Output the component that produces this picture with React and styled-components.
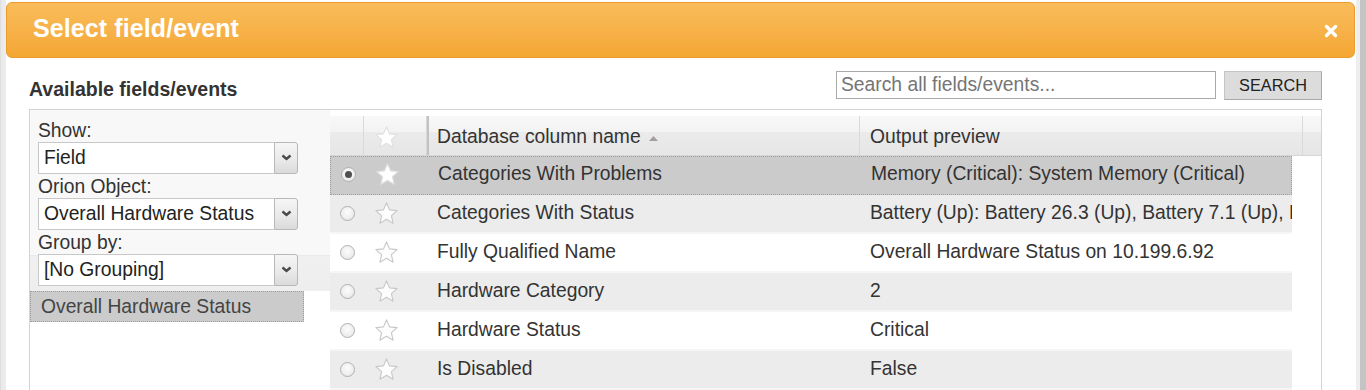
import styled, { createGlobalStyle } from "styled-components";

const GlobalStyle = createGlobalStyle`
  html, body {
    margin: 0;
    padding: 0;
    background: #fff;
  }
  body {
    font-family: "Liberation Sans", Arial, sans-serif;
    color: #333;
    overflow: hidden;
  }
  * {
    box-sizing: border-box;
  }
`;

const rows = [
  { name: "Categories With Problems", preview: "Memory (Critical): System Memory (Critical)", selected: true },
  { name: "Categories With Status", preview: "Battery (Up): Battery 26.3 (Up), Battery 7.1 (Up), Drive (Up)" },
  { name: "Fully Qualified Name", preview: "Overall Hardware Status on 10.199.6.92" },
  { name: "Hardware Category", preview: "2" },
  { name: "Hardware Status", preview: "Critical" },
  { name: "Is Disabled", preview: "False" },
];

const filters = [
  { label: "Show:", value: "Field" },
  { label: "Orion Object:", value: "Overall Hardware Status" },
  { label: "Group by:", value: "[No Grouping]" },
];

const Star = ({ filled }) => (
  <StarSvg viewBox="0 0 24 24" $filled={filled}>
    <polygon points="12,1.8 14.9,8.5 22.2,9.2 16.7,14.1 18.3,21.3 12,17.6 5.7,21.3 7.3,14.1 1.8,9.2 9.1,8.5" />
  </StarSvg>
);

const App = () => {
  return (
    <Page>
      <GlobalStyle />
      <LeftEdge />
      <Dialog>
        <Header>
          <Title>Select field/event</Title>
          <CloseIcon viewBox="0 0 14 14">
            <path d="M2.5 2.5 L11.5 11.5 M11.5 2.5 L2.5 11.5" />
          </CloseIcon>
        </Header>
        <Body>
          <Toolbar>
            <SectionTitle>Available fields/events</SectionTitle>
            <SearchGroup>
              <SearchInput placeholder="Search all fields/events..." />
              <SearchButton>SEARCH</SearchButton>
            </SearchGroup>
          </Toolbar>
          <Panel>
            <Sidebar>
              <FilterBox>
                {filters.map((f) => (
                  <FilterField key={f.label}>
                    <FilterLabel>{f.label}</FilterLabel>
                    <Combo>
                      <ComboValue>{f.value}</ComboValue>
                      <ComboButton>
                        <svg width="11" height="7" viewBox="0 0 11 7">
                          <polyline points="1.5,1.5 5.5,5 9.5,1.5" fill="none" stroke="#4a4a4a" strokeWidth="2.4" />
                        </svg>
                      </ComboButton>
                    </Combo>
                  </FilterField>
                ))}
              </FilterBox>
              <GroupItem>Overall Hardware Status</GroupItem>
            </Sidebar>
            <Grid>
              <GridHeader>
                <HeadCell $w={34} />
                <HeadCell $w={63} $pad={10}>
                  <Star filled />
                </HeadCell>
                <HeadCell $w={433} $pad={8} $sorted>
                  Database column name
                  <SortArrow viewBox="0 0 9 5">
                    <polygon points="0,5 4.5,0 9,5" />
                  </SortArrow>
                </HeadCell>
                <HeadCell $w={443}>Output preview</HeadCell>
                <HeadCell $w={18} />
              </GridHeader>
              {rows.map((r, i) => (
                <Row key={r.name} $alt={i % 2 === 1} $selected={r.selected}>
                  <Cell $w={34} $center>
                    <Radio $checked={r.selected} />
                  </Cell>
                  <Cell $w={63} $pad={10}>
                    <Star filled={r.selected} />
                  </Cell>
                  <Cell $w={433}>{r.name}</Cell>
                  <Cell $w={432}>{r.preview}</Cell>
                </Row>
              ))}
            </Grid>
          </Panel>
        </Body>
      </Dialog>
      <RightEdge />
    </Page>
  );
};

export default App;

const Page = styled.div`
  display: flex;
  height: 390px;
  overflow: hidden;
`;

const LeftEdge = styled.div`
  width: 6px;
  flex-shrink: 0;
  background: linear-gradient(to right, #dcdcdc 0, #ebebeb 2px, #ececec 100%);
`;

const RightEdge = styled.div`
  width: 10px;
  flex-shrink: 0;
  background: linear-gradient(to right, #eeeeee 0, #eeeeee 4px, #c4c4c4 4px, #c4c4c4 100%);
`;

const Dialog = styled.div`
  flex: 1;
  display: flex;
  flex-direction: column;
  padding-top: 2px;
  background: #fff;
`;

const Header = styled.div`
  height: 57px;
  margin-right: 1px;
  display: flex;
  align-items: center;
  justify-content: space-between;
  padding: 0 16px 3px 26px;
  border: 1px solid #eb9c2c;
  border-radius: 6px;
  background: linear-gradient(to bottom, #f9bc58 0%, #f7b24a 50%, #f4a632 100%);
`;

const Title = styled.h1`
  margin: 0;
  font-size: 25px;
  font-weight: bold;
  color: #fff;
  letter-spacing: 0.1px;
`;

const CloseIcon = styled.svg`
  width: 14px;
  height: 14px;
  margin-top: 5px;
  stroke: #fff;
  stroke-width: 3.4;
  stroke-linecap: round;
  fill: none;
`;

const Body = styled.div`
  flex: 1;
  display: flex;
  flex-direction: column;
  padding: 0 34px 0 23px;
`;

const Toolbar = styled.div`
  height: 51px;
  display: flex;
  align-items: flex-end;
  justify-content: space-between;
  padding-bottom: 9px;
`;

const SectionTitle = styled.h2`
  margin: 0;
  font-size: 19.5px;
  line-height: 22px;
  font-weight: bold;
  color: #333;
`;

const SearchGroup = styled.div`
  display: flex;
  align-items: flex-end;
  gap: 8px;
`;

const SearchInput = styled.input`
  width: 380px;
  height: 28px;
  margin-bottom: 1px;
  padding: 0 4px;
  border: 1px solid #a9a9a9;
  font-family: "Liberation Sans", Arial, sans-serif;
  font-size: 19.3px;
  color: #333;
  outline: none;
  &::placeholder {
    color: #757575;
  }
`;

const SearchButton = styled.button`
  width: 98px;
  height: 29px;
  padding: 0;
  background: #dcdcdc;
  border: 1px solid #c4c4c4;
  border-right-color: #a8a8a8;
  border-bottom-color: #a8a8a8;
  font-family: "Liberation Sans", Arial, sans-serif;
  font-size: 16.3px;
  color: #222;
`;

const Panel = styled.div`
  flex: 1;
  display: flex;
  border: 1px solid #d3d3d3;
  border-bottom: none;
  min-height: 0;
`;

const Sidebar = styled.div`
  width: 300px;
  flex-shrink: 0;
  display: flex;
  flex-direction: column;
`;

const FilterBox = styled.div`
  display: flex;
  flex-direction: column;
  gap: 2px;
  padding: 10px 0 5px 8px;
  background: linear-gradient(
    to bottom,
    #f8f8f8 0,
    #f8f8f8 145px,
    #e4e4e4 145px,
    #f0f0f0 146px,
    #eeeeee 100%
  );
`;

const FilterField = styled.div`
  display: flex;
  flex-direction: column;
  gap: 2px;
`;

const FilterLabel = styled.div`
  height: 20px;
  line-height: 22px;
  font-size: 19.3px;
  color: #333;
`;

const Combo = styled.div`
  width: 260px;
  height: 32px;
  display: flex;
`;

const ComboValue = styled.div`
  flex: 1;
  background: #fff;
  border: 1px solid #c8c8c8;
  border-right: none;
  padding-left: 5px;
  display: flex;
  align-items: center;
  font-size: 19.3px;
  color: #222;
  white-space: nowrap;
  overflow: hidden;
`;

const ComboButton = styled.div`
  width: 24px;
  display: flex;
  align-items: center;
  justify-content: center;
  border: 1px solid #b8b8b8;
  border-radius: 0 3px 3px 0;
  background: linear-gradient(to bottom, #f6f6f6 0%, #e8e8e8 60%, #dadada 100%);
  padding-bottom: 2px;
`;

const GroupItem = styled.div`
  width: 274px;
  height: 31px;
  display: flex;
  align-items: center;
  padding: 1px 0 0 10px;
  background: #cbcbcb;
  border: 1px dotted #9c9c9c;
  font-size: 19.3px;
  color: #444;
`;

const Grid = styled.div`
  flex: 1;
  padding-top: 6px;
  background: #fff;
  overflow: hidden;
`;

const GridHeader = styled.div`
  display: flex;
  height: 40px;
  border-bottom: 1px solid #d6d6d6;
  background: linear-gradient(to bottom, #f8f8f8 0%, #f3f3f3 40%, #ebebeb 41%, #e6e6e6 100%);
`;

const HeadCell = styled.div`
  width: ${(p) => p.$w}px;
  flex-shrink: 0;
  display: flex;
  align-items: center;
  padding-top: 3px;
  padding-left: ${(p) => (p.$pad != null ? p.$pad : 10)}px;
  border-right: 1px solid #d9d9d9;
  border-left: ${(p) => (p.$sorted ? "2px solid #c2c2c2" : "none")};
  font-size: 19.3px;
  color: #333;
  white-space: nowrap;
  &:last-child {
    border-right: none;
  }
`;

const SortArrow = styled.svg`
  width: 9px;
  height: 5px;
  margin-left: 8px;
  margin-top: 3px;
  fill: #a0a0a0;
`;

const Row = styled.div`
  width: 962px;
  height: 39px;
  display: flex;
  padding-top: ${(p) => (p.$selected ? 6 : 7)}px;
  background: ${(p) => (p.$selected ? "#cbcbcb" : p.$alt ? "#ececec" : "#fff")};
  border: ${(p) => (p.$selected ? "1px dotted #9c9c9c" : "none")};
  border-bottom: ${(p) => (p.$selected ? "1px dotted #9c9c9c" : "2px solid #f6f6f6")};
`;

const Cell = styled.div`
  width: ${(p) => p.$w}px;
  flex-shrink: 0;
  height: 22px;
  display: flex;
  align-items: center;
  justify-content: ${(p) => (p.$center ? "center" : "flex-start")};
  padding-left: ${(p) => (p.$center ? 0 : p.$pad != null ? p.$pad : 10)}px;
  font-size: 19.3px;
  line-height: 22px;
  color: #333;
  white-space: nowrap;
  overflow: hidden;
`;

const Radio = styled.span`
  width: 15px;
  height: 15px;
  border-radius: 50%;
  border: 1px solid #b0b0b0;
  background: radial-gradient(circle at 50% 40%, #fdfdfd 0%, #e4e4e4 100%);
  display: flex;
  align-items: center;
  justify-content: center;
  &::after {
    content: "";
    width: 7px;
    height: 7px;
    border-radius: 50%;
    background: #4f4f4f;
    display: ${(p) => (p.$checked ? "block" : "none")};
  }
`;

const StarSvg = styled.svg`
  width: 25px;
  height: 25px;
  flex-shrink: 0;
  fill: ${(p) => (p.$filled ? "#fff" : "#fdfdfd")};
  stroke: ${(p) => (p.$filled ? "#e0e0e0" : "#c8c8c8")};
  stroke-width: 1.1;
  stroke-linejoin: round;
`;
